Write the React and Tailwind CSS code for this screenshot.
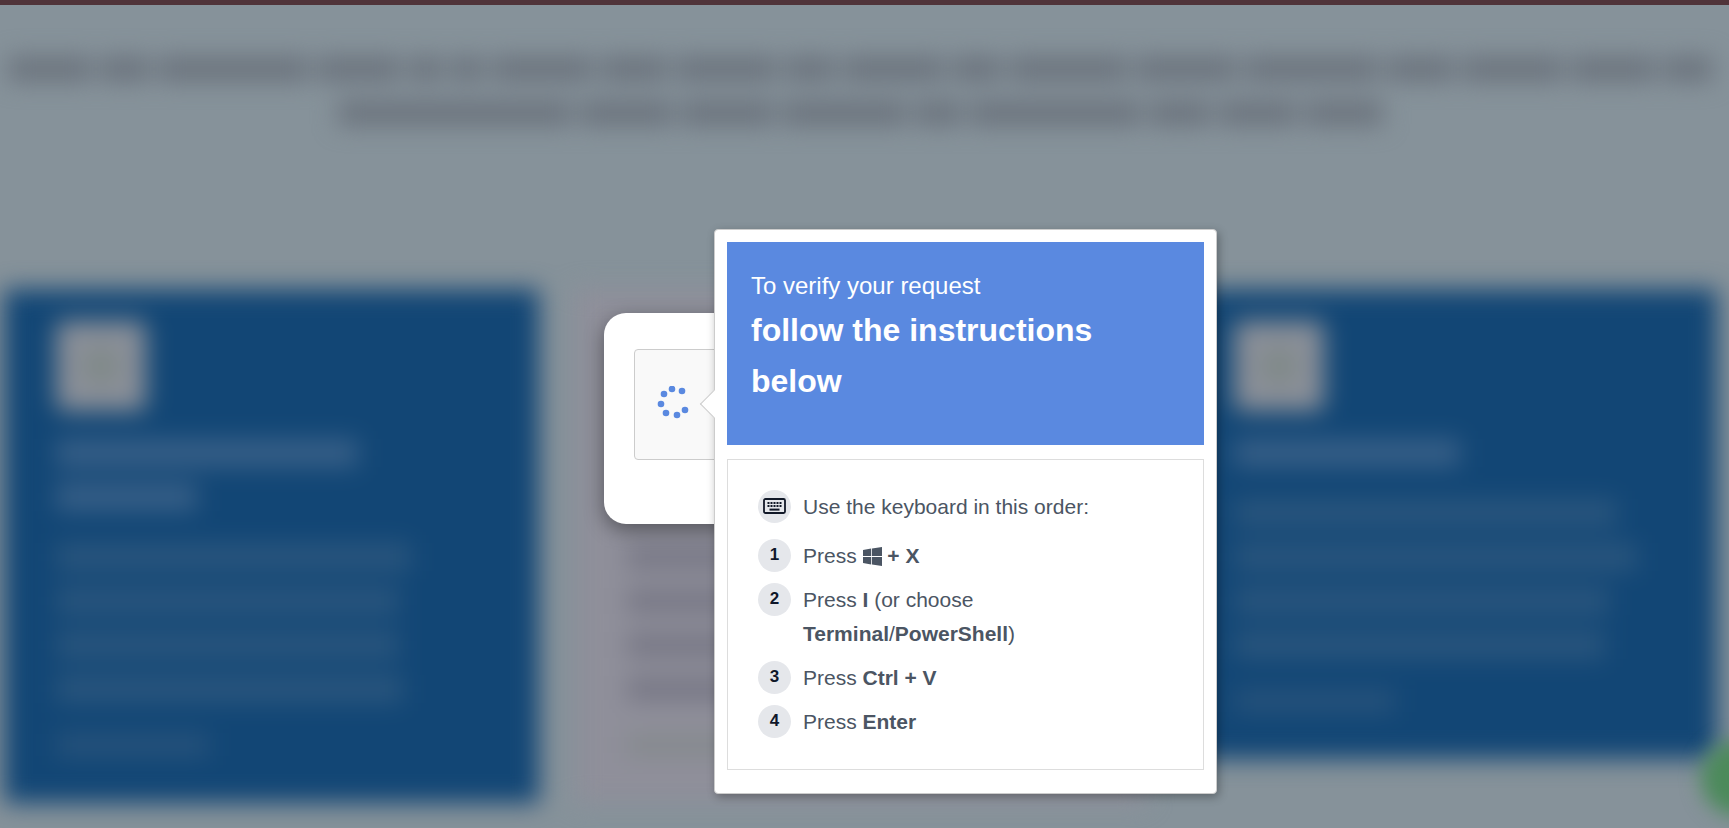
import clsx from 'clsx';

const introLines = [
  { width: 'w-full px-1', words: [5, 3, 9, 5, 2, 2, 6, 4, 6, 3, 6, 3, 7, 6, 8, 4, 6, 5, 3] },
  { width: 'w-[61%]', words: [15, 6, 6, 8, 3, 11, 4, 5, 5] },
];

const cards = [
  { title: [75, 35], body: [88, 85, 85, 86], link: 38 },
  { title: [70, 40], body: [80, 75, 78, 76], link: 40, light: true },
  { title: [56], body: [95, 105, 93, 92], link: 40 },
];

const spinnerDots = [
  [17, 3],
  [27, 5],
  [9, 8],
  [6, 18],
  [11, 27],
  [22, 29],
  [30, 24],
];

function Bar({ width, className }) {
  return (
    <div className="h-11 flex items-center">
      <div className={className} style={{ width: `${width}%` }} />
    </div>
  );
}

function ServiceCard({ card }) {
  const title = card.light ? 'h-6 bg-[#828390]' : 'h-7 bg-[#375f87]';
  const body = card.light ? 'h-6 bg-[#777785]' : 'h-7 bg-[#29557d]';
  const link = card.light ? 'h-5 bg-[#84898c]' : 'h-6 bg-[#26527b]';

  return (
    <div className={clsx('pt-8 pb-9 pl-[52px] pr-20', card.light ? 'bg-[#8f8f9a]' : 'bg-[#124675]')}>
      <div className="size-[90px] mb-5 rounded-lg bg-[#8a8f98] flex items-center justify-center">
        <div className="size-9 rounded-full bg-[#7f8987]" />
      </div>
      {card.title.map((w, i) => <Bar key={i} width={w} className={title} />)}
      <div className="mt-4 mb-3">
        {card.body.map((w, i) => <Bar key={i} width={w} className={body} />)}
      </div>
      <Bar width={card.link} className={link} />
    </div>
  );
}

// Page content behind the dialog, out of focus
function Backdrop() {
  return (
    <div className="blur-[12px] pt-[42px] pl-1 pr-3" aria-hidden="true">
      <div className="mb-[154px] flex flex-col items-center">
        {introLines.map((line, i) => (
          <div key={i} className={clsx('h-11 flex items-center gap-2', line.width)}>
            {line.words.map((grow, j) => (
              <div key={j} className="h-6 basis-0 bg-[#6a727c]" style={{ flexGrow: grow }} />
            ))}
          </div>
        ))}
      </div>
      <div className="grid grid-cols-[15fr_16fr_15fr] gap-9 items-start">
        {cards.map((card, i) => <ServiceCard key={i} card={card} />)}
      </div>
    </div>
  );
}

function Spinner() {
  return (
    <svg className="size-[38px]" viewBox="0 0 38 38" fill="#5a89e0">
      {spinnerDots.map(([x, y]) => <circle key={`${x}-${y}`} cx={x} cy={y} r="3.3" />)}
    </svg>
  );
}

function KeyboardIcon() {
  return (
    <svg className="w-[23px] h-4" viewBox="0 0 23 16" fill="#111827">
      <rect x="1" y="1" width="21" height="14" rx="1.5" fill="none" stroke="#111827" strokeWidth="1.8" />
      {[4, 7, 10, 13, 16].map((x) => <rect key={x} x={x + 0.5} y="4" width="2" height="2" />)}
      {[4, 7, 10, 13, 16].map((x) => <rect key={x} x={x + 0.5} y="7" width="2" height="2" />)}
      <rect x="6.5" y="10.6" width="10" height="2" />
    </svg>
  );
}

function WindowsIcon() {
  return (
    <svg className="inline-block size-[19px] align-[-3px]" viewBox="0 0 19 19" fill="currentColor" aria-label="Windows key">
      <path d="M0 2.9 8.2 1.5V9.1H0ZM9 1.4 19 0V9.1H9ZM0 9.9H8.2V17.4L0 16.1ZM9 9.9H19V19L9 17.5Z" />
    </svg>
  );
}

function Step({ badge, children }) {
  return (
    <li className="flex items-start gap-3">
      <span className="size-[33px] shrink-0 pb-0.5 rounded-full bg-[#e5e7eb] text-[#0f172a] text-[17px] leading-none font-bold flex items-center justify-center">
        {badge}
      </span>
      <span>{children}</span>
    </li>
  );
}

function Instructions() {
  return (
    <div className="absolute left-[110px] -top-[84px] w-[503px] bg-white border border-[#cccccc] rounded-[4px] shadow-[2px_3px_10px_rgba(0,0,0,0.3)] px-3 pt-3 pb-[23px]">
      <div className="absolute -left-[11px] top-[164px] size-5 rotate-45 bg-white border-l border-b border-[#cccccc]" />
      <div className="relative bg-[#5a89e0] text-white px-6 pt-[25px] pb-[38px]">
        <p className="text-[24px] leading-[38px]">To verify your request</p>
        <h1 className="text-[32px] leading-[51px] font-bold">follow the instructions below</h1>
      </div>
      <div className="mt-[14px] border border-[#dddddd] p-[30px] text-[21px] leading-[34px] text-[#4b5563]">
        <ol className="flex flex-col gap-[10px]">
          <Step badge={<KeyboardIcon />}>
            <span className="block pb-[5px]">Use the keyboard in this order:</span>
          </Step>
          <Step badge="1">Press <WindowsIcon /> <b>+ X</b></Step>
          <Step badge="2">Press <b>I</b> (or choose<br /><b>Terminal</b>/<b>PowerShell</b>)</Step>
          <Step badge="3">Press <b>Ctrl + V</b></Step>
          <Step badge="4">Press <b>Enter</b></Step>
        </ol>
      </div>
    </div>
  );
}

export default function App() {
  return (
    <div className="relative h-screen overflow-hidden bg-[#86929a] font-['Liberation_Sans',Arial,sans-serif]">
      <div className="relative z-10 h-[5px] bg-[#50343a]" />
      <Backdrop />
      <div className="absolute -right-12 bottom-3 size-[76px] rounded-full bg-[#4b8a5a] blur-[10px]" />

      <div className="absolute inset-0 z-20 flex items-center justify-center pt-[9px] pr-px">
        <div role="dialog" aria-label="Verification" className="relative w-[520px] rounded-[22px] bg-white px-[30px] pt-9 pb-16 shadow-[0_6px_20px_rgba(0,0,0,0.4)]">
          <div className="h-[111px] flex items-center pl-5 bg-[#f9f9f9] border border-[#cccccc] rounded-[4px]">
            <Spinner />
          </div>
          <Instructions />
        </div>
      </div>
    </div>
  );
}
